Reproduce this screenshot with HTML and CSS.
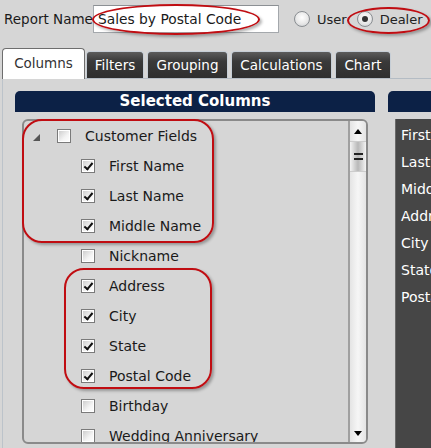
FILE: index.html
```html
<!DOCTYPE html>
<html>
<head>
<meta charset="utf-8">
<link rel="stylesheet" href="styles.css">
</head>
<body>
<div class="top">
  <span class="label">Report Name</span>
  <div class="input">Sales by Postal Code</div>
  <span class="radio"></span><span class="rlabel">User</span>
  <span class="radio on"></span><span class="rlabel">Dealer</span>
</div>
<div class="tabs">
  <div class="tab active t-columns">Columns</div>
  <div class="tab t-filters">Filters</div>
  <div class="tab t-grouping">Grouping</div>
  <div class="tab t-calc">Calculations</div>
  <div class="tab t-chart">Chart</div>
</div>
<div class="panel">
  <div class="col">
    <div class="head">Selected Columns</div>
    <div class="listbox">
      <div class="items">
        <div class="row parent"><span class="tri"></span><span class="cb"></span><span>Customer Fields</span></div>
        <div class="row"><span class="cb on"></span><span>First Name</span></div>
        <div class="row"><span class="cb on"></span><span>Last Name</span></div>
        <div class="row"><span class="cb on"></span><span>Middle Name</span></div>
        <div class="row"><span class="cb"></span><span>Nickname</span></div>
        <div class="row"><span class="cb on"></span><span>Address</span></div>
        <div class="row"><span class="cb on"></span><span>City</span></div>
        <div class="row"><span class="cb on"></span><span>State</span></div>
        <div class="row"><span class="cb on"></span><span>Postal Code</span></div>
        <div class="row"><span class="cb"></span><span>Birthday</span></div>
        <div class="row"><span class="cb"></span><span>Wedding Anniversary</span></div>
      </div>
      <div class="scroll">
        <span class="arrow up"></span>
        <span class="thumb"><span class="grip"></span></span>
        <span class="track"></span>
        <span class="arrow down"></span>
      </div>
    </div>
  </div>
  <div class="col">
    <div class="head"></div>
    <div class="darkbox">
      <div class="drow">First Name</div>
      <div class="drow">Last Name</div>
      <div class="drow">Middle Name</div>
      <div class="drow">Address</div>
      <div class="drow">City</div>
      <div class="drow">State</div>
      <div class="drow">Postal Code</div>
    </div>
  </div>
</div>
<div class="mark m1"></div>
<div class="mark m2"></div>
<div class="mark m3"></div>
<div class="mark m4"></div>
</body>
</html>
```
FILE: styles.css
```css
html, body { margin: 0; padding: 0; }
body {
  width: 431px; height: 448px; overflow: hidden;
  background: #d6d6d6;
  font-family: "DejaVu Sans", Verdana, sans-serif;
  font-size: 13.5px;
  color: #1a1a1a;
  position: relative;
}
.top {
  display: flex; align-items: center;
  height: 28px; padding: 5px 0 0 4px;
}
.label { width: 89px; flex: none; }
.input {
  width: 180px; height: 26px; line-height: 26px; flex: none;
  padding-left: 4px;
  background: #fff; border: 1px solid #a4a8ac; border-top-color: #8c9094;
  margin-right: 15px;
  font-size: 13.8px;
}
.radio {
  width: 14px; height: 14px; border-radius: 50%; flex: none;
  border: 1px solid #8a8e92;
  background: radial-gradient(circle at 50% 40%, #ffffff 0%, #e8e8e8 55%, #c4c8cc 100%);
  margin-right: 7px; position: relative;
}
.radio.on { margin-left: 10px; }
.radio.on::after {
  content: ""; position: absolute; left: 4px; top: 4px;
  width: 6px; height: 6px; border-radius: 50%; background: #333;
}
.rlabel { color: #222; white-space: nowrap; font-size: 13px; }
.tabs {
  display: flex; align-items: flex-end; gap: 3px;
  height: 31px; margin-top: 14px; padding-left: 2px;
  position: relative; z-index: 1;
}
.tab {
  height: 27px; line-height: 27px; flex: none;
  text-align: center; box-sizing: border-box;
  color: #fff;
  background: linear-gradient(#5c5c5c, #3a3a3a 35%, #2e2e2e);
  border: 1px solid #c6ced6; border-bottom: none;
  border-radius: 4px 4px 0 0;
}
.tab.active {
  height: 31px; line-height: 29px;
  background: #fff; color: #333;
  border: 1px solid #6e6e6e; border-bottom: none;
  margin-bottom: -1px; margin-right: -2px;
}
.t-columns { width: 83px; }
.t-filters { width: 58px; }
.t-grouping { width: 81px; }
.t-calc { width: 101px; }
.t-chart { width: 56px; }
.panel {
  display: flex; gap: 13px;
  margin-left: 2px;
  border-left: 1px solid #bcc3ca; border-top: 1px solid #b4bcc4;
  padding: 12px 0 0 12px;
  height: 400px;
}
.col { width: 360px; flex: none; display: flex; flex-direction: column; }
.head {
  height: 21px; line-height: 21px;
  background: #0c2146;
  border-radius: 5px 5px 0 0;
  color: #fff; font-weight: bold; font-size: 15px; text-align: center;
}
.listbox {
  margin: 7px 7px 0 7px;
  height: 321px;
  border: 2px solid #8a8a8a; border-radius: 6px;
  display: flex; overflow: hidden;
  font-size: 14px;
}
.items { flex: 1; }
.row {
  height: 30px; display: flex; align-items: center;
  padding-left: 57px; white-space: nowrap;
}
.row.parent { padding-left: 9px; }
.tri {
  width: 0; height: 0;
  border-left: 7px solid transparent; border-bottom: 7px solid #555;
  margin-right: 17px; margin-top: 2px;
}
.cb {
  width: 12px; height: 12px; flex: none;
  border: 1px solid #7a7a7a;
  box-shadow: inset 0 0 0 1px #fff;
  background: linear-gradient(135deg, #c8c8c8, #f4f4f4 60%, #ffffff);
  margin-right: 14px; position: relative;
}
.cb.on::after {
  content: ""; position: absolute; left: 4px; top: 1px;
  width: 3px; height: 7px;
  border: solid #111; border-width: 0 2px 2px 0;
  transform: rotate(40deg);
}
.scroll {
  width: 16px; flex: none;
  border-left: 2px solid #a0a0a0;
  background: linear-gradient(90deg, #e4e4e4, #f6f6f6 50%, #e4e4e4);
  display: flex; flex-direction: column; align-items: center;
}
.arrow { width: 0; height: 0; border-left: 4px solid transparent; border-right: 4px solid transparent; }
.arrow.up { border-bottom: 5px solid #000; margin-top: 8px; }
.arrow.down { border-top: 5px solid #000; margin-bottom: 6px; }
.track { flex: 1; }
.thumb {
  width: 16px; height: 29px; margin-top: 7px;
  background: linear-gradient(90deg, #f4f4f4, #b8b8b8 50%, #f4f4f4);
  border-top: 1px solid #ccc; border-bottom: 1px solid #ccc;
  display: flex; align-items: center; justify-content: center;
}
.grip { width: 9px; height: 3px; border-top: 2px solid #222; border-bottom: 2px solid #222; }
.darkbox {
  margin: 7px 0 0 7px;
  flex: 1;
  background: #464646;
  border-left: 1px solid #6a6a6a;
  padding-top: 3px;
  font-size: 14px;
}
.drow { height: 27px; line-height: 27px; padding-left: 5px; color: #fff; white-space: nowrap; }
.mark {
  position: absolute;
  border: 2px solid #c00d12;
  box-shadow: 2px 2px 3px rgba(0,0,0,0.3);
}
.m1 { left: 92px; top: 4px; width: 164px; height: 27px; border-radius: 50%; }
.m2 { left: 347px; top: 7px; width: 79px; height: 23px; border-radius: 50%; }
.m3 { left: 22px; top: 119px; width: 188px; height: 120px; border-radius: 20px; }
.m4 { left: 64px; top: 268px; width: 144px; height: 117px; border-radius: 20px; }
```
